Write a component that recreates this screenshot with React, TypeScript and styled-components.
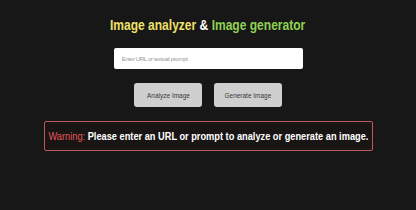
import React, { useState } from 'react';
import styled, { createGlobalStyle } from 'styled-components';

const GlobalStyle = createGlobalStyle`
	html, body {
		margin: 0;
		padding: 0;
		background: #171717;
	}
	body {
		font-family: 'Liberation Sans', Arial, sans-serif;
	}
`;

const App: React.FC = () => {
	const [prompt, setPrompt] = useState('');

	return (
		<Page>
			<GlobalStyle />
			<Title>
				<Squeeze $scale={0.86}>
					<span className="yellow">Image analyzer</span> &amp;{' '}
					<span className="green">Image generator</span>
				</Squeeze>
			</Title>
			<PromptInput
				type="text"
				placeholder="Enter URL or textual prompt"
				value={prompt}
				onChange={(e) => setPrompt(e.target.value)}
			/>
			<Buttons>
				<ActionButton>
					<Squeeze $scale={0.81}>Analyze Image</Squeeze>
				</ActionButton>
				<ActionButton>
					<Squeeze $scale={0.81}>Generate Image</Squeeze>
				</ActionButton>
			</Buttons>
			<Warning>
				<Squeeze $scale={0.84}>
					<span className="label">Warning:</span> Please enter an URL or
					prompt to analyze or generate an image.
				</Squeeze>
			</Warning>
		</Page>
	);
};

const Page = styled.div`
	width: 416px;
	height: 210px;
	display: flex;
	flex-direction: column;
	align-items: center;
	padding-top: 17px;
	box-sizing: border-box;
	background: #171717;
`;

// the reference uses a narrow face; squeeze the text horizontally
const Squeeze = styled.span<{ $scale: number }>`
	display: inline-block;
	white-space: nowrap;
	transform: scaleX(${(p) => p.$scale});
	transform-origin: center;
`;

const Title = styled.h1`
	margin: 0;
	font-size: 14px;
	line-height: 17px;
	font-weight: bold;
	color: #ffffff;
	.yellow {
		color: #f0e06a;
	}
	.green {
		color: #8fd152;
	}
`;

const PromptInput = styled.input`
	margin-top: 14px;
	width: 189px;
	height: 21px;
	box-sizing: border-box;
	border: none;
	border-radius: 2px;
	background: #ffffff;
	padding: 0 8px;
	font-family: inherit;
	font-size: 6.2px;
	letter-spacing: -0.4px;
	outline: none;
	&::placeholder {
		color: #9a9a9a;
	}
`;

const Buttons = styled.div`
	margin-top: 14px;
	display: flex;
	gap: 12px;
`;

const ActionButton = styled.button`
	width: 68px;
	height: 24px;
	border: none;
	border-radius: 3px;
	background: #cfcfcf;
	color: #3a3a3a;
	font-family: inherit;
	font-size: 8px;
	cursor: pointer;
	padding: 0;
	display: flex;
	align-items: center;
	justify-content: center;
`;

const Warning = styled.div`
	margin-top: 14px;
	width: 329px;
	height: 30px;
	box-sizing: border-box;
	border: 1.5px solid #c2585d;
	border-radius: 2px;
	background: #1a1515;
	display: flex;
	align-items: center;
	justify-content: center;
	color: #ffffff;
	font-size: 11px;
	font-weight: bold;
	.label {
		color: #e25858;
		font-weight: normal;
	}
`;

export default App;
